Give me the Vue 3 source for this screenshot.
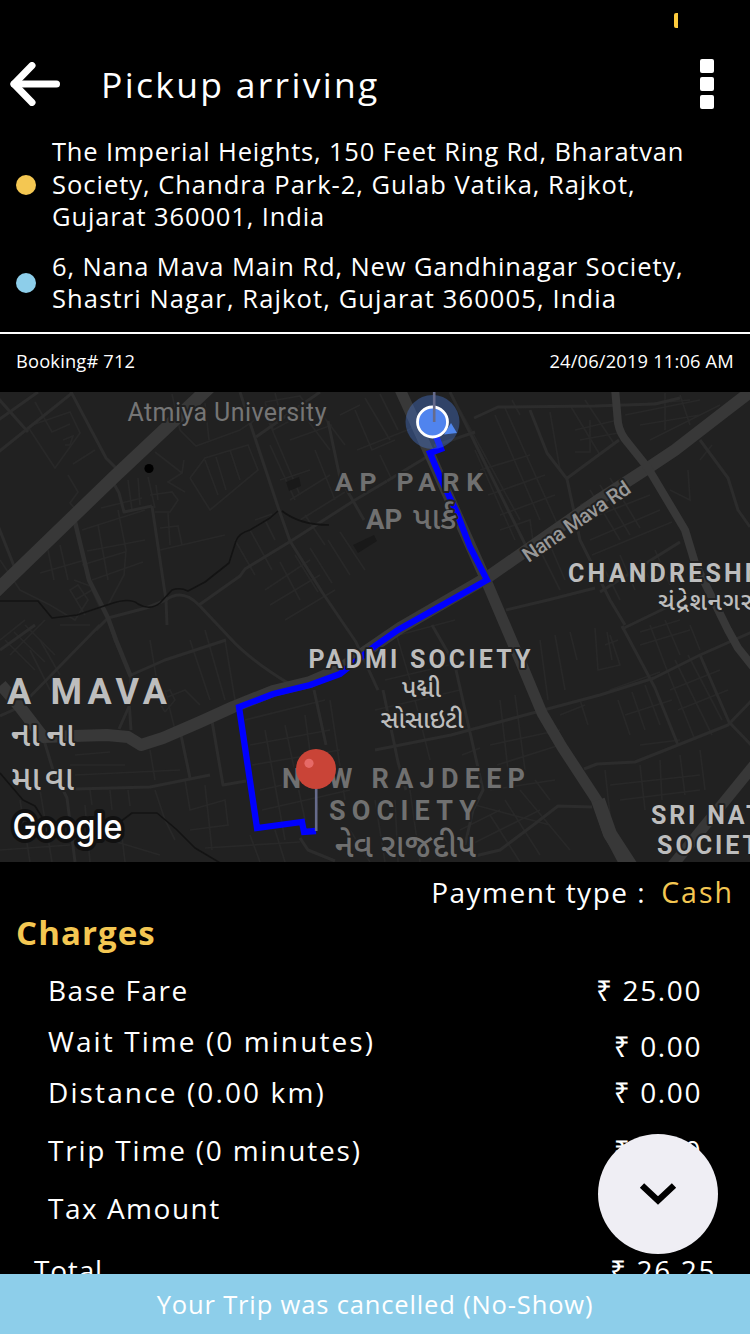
<script setup>
const stops = [
  { kind: 'pickup', lines: ['The Imperial Heights, 150 Feet Ring Rd, Bharatvan', 'Society, Chandra Park-2, Gulab Vatika, Rajkot,', 'Gujarat 360001, India'] },
  { kind: 'dropoff', lines: ['6, Nana Mava Main Rd, New Gandhinagar Society,', 'Shastri Nagar, Rajkot, Gujarat 360005, India'] }
]

const charges = [
  { key: 'base', label: 'Base Fare', value: '25.00' },
  { key: 'wait', label: 'Wait Time (0 minutes)', value: '0.00' },
  { key: 'distance', label: 'Distance (0.00 km)', value: '0.00' },
  { key: 'trip', label: 'Trip Time (0 minutes)', value: '0.00' },
  { key: 'tax', label: 'Tax Amount', value: '' },
  { key: 'total', label: 'Total', value: '26.25' }
]

const highways = [
  { w: 13, d: 'M214 383L113 478L-6 593' },
  { w: 11, d: 'M398 385L430 455L485 578L505 625L522 665L542 713L562 747L598 802L608 832L626 866' },
  { w: 14, d: 'M598 800L610 834L632 868' },
  { w: 12, d: 'M754 389L728 409L675 450L648 468L600 499L488 577L400 628L340 669L310 682L273 691L233 707L200 722L163 738L141 745L128 737L107 735L73 736L43 737L20 707L1 685' },
  { w: 8, d: 'M615 388L618 423Q620 434 628 443L648 468L685 530L695 563L728 630L738 648L754 668' },
  { w: 11, d: 'M755 764L672 866' }
]

const roads = [
  'M-4 454L72 393', 'M-3 421L38 392', 'M-3 397L28 432', 'M70 390L106 458L120 472', 'M-3 523L14 566', 'M113 482L119 493L124 512L152 506',
  'M152 506L166 600L167 625', 'M75 522L89 580L108 618L115 640L131 677L129 700L131 730', 'M96 630L108 618L146 608L166 600Q182 588 199 605L230 638Q250 660 288 683',
  'M199 605L240 576L245 569L291 541L355 500L387 481', 'M240 392L251 426L278 507L290 541L322 592L356 642L378 690',
  'M256 437L320 392', 'M328 421L340 478L364 520', 'M0 716L20 707L100 625', 'M131 675L165 660L226 640', 'M131 702L119 729',
  'M43 737L53 770L67 798L75 862', 'M75 789L150 787L210 775', 'M181 735L190 778', 'M212 721L223 785L246 781', 'M314 690L326 745',
  'M450 392L474 441L525 544', 'M474 418L498 407L595 406L655 404L680 398', 'M530 410L547 453L567 479L580 540L610 600L625 625', 'M566 479L619 440',
  'M434 446L475 432', 'M387 481L430 455', 'M506 610L548 600L595 588', 'M600 592L680 542', 'M622 629L682 600', 'M700 440L728 478L738 510L750 527',
  'M456 670L483 790L473 810L465 845', 'M432 625L458 670', 'M375 750L451 735L540 711L600 695L654 678L700 655L752 632', 'M622 626L655 688L678 745',
  'M584 769L597 764L635 762L678 745L728 725L752 700', 'M700 655L729 722L752 746', 'M475 856L500 850L532 826L558 806L592 807',
  'M383 690L398 762L406 790', 'M0 650L35 625', 'M300 838L308 850L335 861'
]

const lanes = [
  'M32 425L70 412L80 433L55 468L28 427', 'M35 402L52 432L70 424', 'M63 440L73 436L70 445L65 445', 'M73 464L95 450M68 475L78 492L70 503L78 512',
  'M155 452L182 473L168 482L185 492M182 473L184 460', 'M128 480L132 510M138 478L140 505M148 477L155 508M156 485L158 500M150 495L172 492L178 500L170 512L155 512',
  'M190 478L205 458L248 445L258 470L210 510L190 478M205 460L218 495M216 457L226 490M230 450L240 480', 'M160 528L178 526L182 545M160 550L225 535M168 513L170 545',
  'M101 508L142 498M82 530L145 510M87 551L145 540M82 565L125 552M92 580L143 562M108 605L124 575L126 550L118 510M98 525L108 580', 'M40 573L85 560M48 550L54 580M60 545L68 580M74 580L90 586',
  'M172 394L180 430L196 446L240 430L270 410M205 403L209 440', 'M265 402L300 396L310 410L273 430L265 402M275 393L282 420M290 440L332 425M270 445L295 500M268 420L300 495',
  'M300 410L330 450M315 405L345 445M280 480L310 470M290 500L330 475M300 520L345 492M315 450L335 500M305 515L325 545M265 520L275 540M255 520L272 514',
  'M235 540L255 575M250 530L272 570M265 590L310 560M270 605L320 575M285 620L335 590M280 562L300 600M295 555L318 592M310 548L332 583M328 540L350 575M340 532L365 570',
  'M355 410L372 450L395 440M365 398L390 440M380 394L398 430M340 415L360 405M357 450L420 425M380 455L392 480', 'M460 410L520 520M475 450L515 540M495 415L540 520M505 408L560 530',
  'M480 470L530 455M488 495L545 475M500 515L555 495M512 400L520 415M550 412L560 470M570 405L600 455M585 400L615 445',
  'M590 420L590 452L575 452M575 430L618 420M580 440L618 433M630 405L690 400M625 415L700 400M640 425L700 415M650 440L720 405M665 393L665 430M680 395L690 425',
  'M590 490L620 540M600 485L630 535M610 478L640 528M580 505L640 478M586 520L650 495M590 540L660 510M592 555L672 522M700 460L712 445M670 490L690 500L688 470',
  'M640 560L650 580M655 550L670 585M540 550L560 590M550 545L565 580M600 560L620 600M620 555L635 590', 'M500 530L530 520L535 555L505 560',
  'M0 560L20 590L50 605L75 620L88 600L78 585L70 590L85 615M75 600L92 590L100 608', 'M0 640L25 620M10 655L45 620M5 640L35 670M14 632L45 662M25 625L55 655',
  'M30 650L50 690M40 640L60 675M60 625L90 625', 'M150 640L160 700L185 690L200 705M165 690L175 730M190 640L210 700M205 630L225 700M225 640L235 700',
  'M75 755L110 752M70 765L125 765M75 775L180 770M150 750L155 780M90 790L92 805M110 790L112 810M128 790L130 806', 'M155 790L165 820L175 840M185 780L190 810L225 800L228 825L190 830M205 785L212 850',
  'M165 712L175 700L170 690L155 695L165 712', 'M245 720L325 700M250 745L330 730M252 765L340 750M260 790L350 770M262 810L350 790M265 730L285 840M285 725L305 820M305 715L318 810M330 700L345 800',
  'M380 640L455 620M385 680L470 660M375 710L460 690M395 630L410 680M415 700L430 760M500 700L508 770M515 695L525 770M490 745L560 730M497 765L560 745M462 755L480 748',
  'M490 790L555 780M475 805L550 825M490 815L520 862M505 800L540 855M520 790L570 850M460 830L500 810M470 845L540 810M535 780L550 800',
  'M540 640L548 700M555 635L565 690M570 632L577 660M595 628L598 670L620 665L610 635M607 632L612 660M605 645L618 640', 'M560 715L585 705M580 700L588 725',
  'M610 690L660 672M625 715L672 700M618 700L630 735M632 692L645 730M645 685L660 725M640 745L680 740', 'M665 665L695 740M675 660L712 735M688 655L722 720M670 690L720 670M678 710L728 690',
  'M640 765L645 810M660 760L662 800M680 755L685 795M700 750L705 790M610 785L700 775M620 800L700 790M605 770L610 815', 'M640 632L680 620M640 645L690 630M650 625L665 665M665 620L680 655M690 625L700 650',
  'M0 850L70 845M20 800L30 862M40 790L52 862M85 805L90 862M110 840L160 855M120 820L125 862', 'M205 848L300 842M250 835L260 862M275 830L285 862M350 830L370 862M375 800L385 862M395 800L398 862M410 790L420 862'
]
</script>

<template>
  <main class="screen">
    <div class="status"><i class="battery" /></div>

    <header class="bar">
      <svg class="back" width="50" height="44" viewBox="0 0 50 44" fill="none" stroke="#fff" stroke-linecap="round" stroke-linejoin="round">
        <path d="M22 3.5L4 22L22 40.5" stroke-width="7" />
        <path d="M4 22H46.5" stroke-width="7" />
      </svg>
      <h1>Pickup arriving</h1>
      <div class="more"><i /><i /><i /></div>
    </header>

    <section class="stops">
      <div v-for="stop in stops" :key="stop.kind" class="stop" :class="stop.kind">
        <i class="dot" />
        <p><span v-for="(line, i) in stop.lines" :key="i" :class="'l' + i">{{ line }}</span></p>
      </div>
    </section>

    <div class="booking"><span>Booking# 712</span><time>24/06/2019 11:06 AM</time></div>

    <svg class="map" viewBox="0 392 750 470" width="750" height="470">
      <rect y="392" width="750" height="470" fill="#212121" />
      <g fill="none" stroke="#282828" stroke-width="1.7"><path v-for="(d, i) in lanes" :key="i" :d="d" /></g>
      <g fill="none" stroke="#2c2c2c" stroke-width="3" stroke-linejoin="round"><path v-for="(d, i) in roads" :key="i" :d="d" /></g>
      <path d="M75 522L89 580L108 618L116 640L131 677" fill="none" stroke="#2f2f2f" stroke-width="4.5" />
      <g fill="none" stroke="#131313" stroke-width="1.6" stroke-linejoin="round">
        <path d="M0 601H38L52 618L77 615L110 604Q130 597 138 604Q150 611 160 603L172 590Q180 587 188 591L205 582L229 563L236 541Q239 533 250 530L270 518L278 511" />
        <path d="M282 511Q300 525 329 525" />
        <path d="M0 773L23 800L35 806L45 822M120 822L132 813L157 813L176 829L195 848L222 864" />
      </g>
      <path d="M286 482L299 477L301 486L289 491ZM353 545L374 535L377 541L358 553Z" fill="#191919" />
      <g fill="none" stroke="#383838" stroke-linejoin="round"><path v-for="(r, i) in highways" :key="i" :d="r.d" :stroke-width="r.w" /></g>
      <circle cx="149" cy="468.500" r="4.600" fill="#000" />

      <path class="route" d="M436 436L441 449L430 453L440 477L457 513L470 547L487 580L398 630L375 646L340 674L310 685L273 694L239 707L257 828L302 822L304 832L316 831" />

      <g class="labels">
        <text class="place" x="127.500" y="421" font-size="25" textLength="199">Atmiya University</text>
        <g class="dim">
          <text x="335" y="490.500" font-size="26.500" textLength="148">AP PARK</text>
          <text x="366" y="528.500" font-size="27.500">AP</text>
          <text class="guj" x="413" y="528.500" font-size="31" textLength="44" lengthAdjust="spacingAndGlyphs">પાર્ક</text>
          <text x="282" y="788" font-size="27" textLength="243">NEW RAJDEEP</text>
          <text x="329" y="820" font-size="27" textLength="147">SOCIETY</text>
          <text class="guj" x="335" y="857" font-size="33" textLength="141" lengthAdjust="spacingAndGlyphs">નેવ રાજદીપ</text>
        </g>
        <text class="street" transform="translate(528.500 563) rotate(-34.500)" font-size="20.500" textLength="126">Nana Mava Rd</text>
        <text x="568" y="582" font-size="25" letter-spacing="3.200">CHANDRESHN</text>
        <text class="guj" x="658" y="610" font-size="25" letter-spacing="1">ચંદ્રેશનગર</text>
        <text x="308.500" y="668" font-size="25" textLength="222">PADMI SOCIETY</text>
        <text class="guj" x="402" y="697" font-size="25" textLength="39">પદ્મી</text>
        <text class="guj" x="380" y="728" font-size="25" textLength="83">સોસાઇટી</text>
        <text x="7" y="704" font-size="36" textLength="160">A MAVA</text>
        <text class="guj" x="11" y="746" font-size="34" textLength="64">નાના</text>
        <text class="guj" x="11" y="790" font-size="34" textLength="63">માવા</text>
        <text x="651" y="823.500" font-size="25" letter-spacing="2.800">SRI NAT</text>
        <text x="657" y="853.500" font-size="25" letter-spacing="3">SOCIET</text>
      </g>

      <circle cx="432.500" cy="422" r="27" fill="#4b7fe6" fill-opacity=".36" />
      <path d="M451 423L457 433L444 434.500Z" fill="#5087ee" />
      <circle cx="432.500" cy="422" r="15" fill="#5084ee" stroke="#fff" stroke-width="2.800" />
      <path d="M434.200 392V422M316.200 788V831" stroke="#666b8b" stroke-width="2.600" />
      <circle cx="316" cy="769" r="20" fill="#c94437" />
      <circle cx="309" cy="763.300" r="4.600" fill="#e66a67" />
      <text class="google" x="12.500" y="838.500" font-size="35" textLength="110" lengthAdjust="spacingAndGlyphs">Google</text>
    </svg>

    <div class="payment"><span>Payment type :</span><b>Cash</b></div>
    <h2>Charges</h2>
    <ul>
      <li v-for="row in charges" :key="row.key" :class="row.key">
        <span>{{ row.label }}</span><span v-if="row.value" class="value">₹ {{ row.value }}</span>
      </li>
    </ul>

    <button class="fab" aria-label="Collapse">
      <svg width="38" height="26" viewBox="0 0 38 26"><path d="M3 4.500L19 19.500L35 4.500" fill="none" stroke="#000" stroke-width="6.300" /></svg>
    </button>
    <footer>Your Trip was cancelled (No-Show)</footer>
  </main>
</template>

<style>
body { background: #000; }
</style>

<style scoped>
.screen { position: relative; width: 750px; height: 1334px; overflow: hidden; background: #000; color: #fff; font-family: "Open Sans", "Noto Sans", sans-serif; }
.status { display: flex; justify-content: flex-end; height: 34px; padding: 13px 72px 0 0; box-sizing: border-box; }
.battery { width: 4px; height: 15px; border-radius: 2px 0 0 2px; background: #fdcb3d; }
.bar { display: flex; align-items: center; height: 100px; padding: 0 36px 0 10px; }
h1 { flex: 1; margin: 0 0 0 41px; font-size: 35.5px; font-weight: 400; line-height: 50px; letter-spacing: 2.3px; }
.more { display: flex; flex-direction: column; gap: 4px; }
.more i { width: 14px; height: 14px; border-radius: 2px; background: #fff; }
.stops { display: flex; flex-direction: column; gap: 17px; height: 200px; padding: 1px 16px 0; box-sizing: border-box; border-bottom: 2px solid #fff; }
.stop { display: flex; align-items: center; gap: 16px; }
.dot { width: 20px; height: 20px; margin-top: 2px; border-radius: 50%; background: #f4c752; }
.dropoff .dot { background: #8dceea; }
p { margin: 0; font-size: 25.5px; line-height: 32.5px; letter-spacing: .82px; white-space: nowrap; }
p span { display: block; }
.pickup .l1 { letter-spacing: .98px; }
.pickup .l2 { letter-spacing: .87px; }
.dropoff .l0 { letter-spacing: .9px; }
.dropoff .l1 { letter-spacing: 1.12px; }
.booking { display: flex; justify-content: space-between; height: 54px; margin-bottom: 4px; padding: 0 16px; font-size: 18.3px; line-height: 54px; letter-spacing: .18px; }
.map { display: block; }
.route { fill: none; stroke: #00f; stroke-width: 6.3; stroke-linejoin: miter; }
.labels { font-family: Roboto, "Noto Sans Gujarati", sans-serif; font-weight: 700; fill: #bdbdbd; stroke: #212121; stroke-width: 4px; stroke-linejoin: round; paint-order: stroke; }
.labels .dim { fill: #707070; }
.labels .place { fill: #757575; font-weight: 400; }
.labels .street { fill: #989898; font-weight: 500; }
.labels .guj { font-weight: 500; }
.google { font-family: Inter, sans-serif; font-weight: 500; fill: #fff; stroke: #111; stroke-width: 8px; stroke-linejoin: round; paint-order: stroke; }
.payment { display: flex; justify-content: flex-end; gap: 15px; height: 40px; padding: 10px 16px 0; font-size: 28px; line-height: 40px; letter-spacing: 1.5px; }
.payment b { color: #f4c752; font-size: 28.5px; font-weight: 400; letter-spacing: 2px; }
h2 { height: 40px; margin: 0 16px; color: #f4c752; font-size: 33px; font-weight: 700; line-height: 42px; letter-spacing: 1.1px; }
ul { margin: 12px 0 0; padding: 0 48px; list-style: none; }
li { display: flex; justify-content: space-between; align-items: center; height: 52px; font-size: 28px; letter-spacing: 1.5px; line-height: 36px; }
.wait { height: 50px; letter-spacing: 2.08px; }
.distance { letter-spacing: 2.12px; }
.wait .value { margin-top: 10px; }
.trip { height: 64px; letter-spacing: 1.8px; }
.total { height: 72px; margin: 0 -14px; letter-spacing: .8px; }
.value { letter-spacing: 1.6px; }
.fab { position: absolute; left: 598px; top: 1134px; display: grid; place-items: center; width: 120px; height: 120px; padding: 0; border: 0; border-radius: 50%; background: #efeef4; }
footer { position: absolute; left: 0; right: 0; bottom: 0; height: 60px; background: #8dceea; font-size: 25.5px; line-height: 61px; letter-spacing: .85px; text-align: center; }
</style>
